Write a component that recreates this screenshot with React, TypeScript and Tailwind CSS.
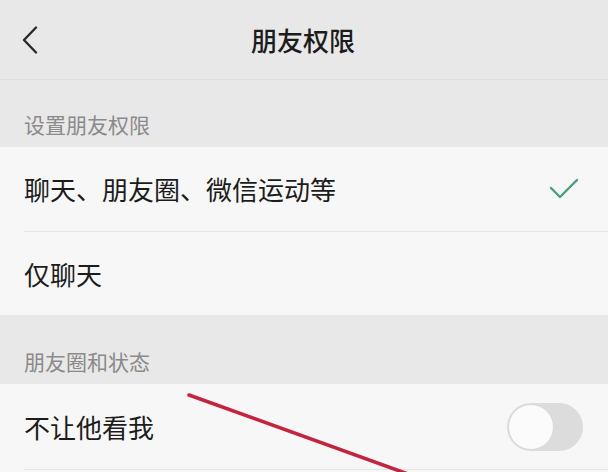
import React from "react";

const font = { fontFamily: '"Noto Sans CJK SC", "Noto Sans", sans-serif' };

export default function App() {
  return (
    <div
      className="relative w-[608px] h-[472px] overflow-hidden bg-[#e8e8e8] text-[#1c1c1c]"
      style={font}
    >
      {/* Header */}
      <div className="grid grid-cols-[1fr_auto_1fr] items-center h-[80px] border-b border-[#e0e0e0]">
        <div className="pl-[22px] flex items-center">
          <svg width="16" height="28" viewBox="0 0 16 28" fill="none">
            <path d="M14 1.5 L2 14 L14 26.5" stroke="#2a2a2a" strokeWidth="2.4" strokeLinecap="round" strokeLinejoin="round" />
          </svg>
        </div>
        <div className="text-[26px] leading-[32px] font-medium pr-[2px]">朋友权限</div>
        <div />
      </div>

      {/* Section header 1 */}
      <div className="h-[67px] flex items-end pb-[9px] pl-[24px] text-[21px] leading-[28px] text-[#8a8a8a]">
        设置朋友权限
      </div>

      {/* Rows */}
      <div className="bg-[#f7f7f7]">
        <div className="h-[84px] flex items-center justify-between pl-[24px] pr-[28px]">
          <span className="text-[26px] leading-[32px]">聊天、朋友圈、微信运动等</span>
          <svg width="32" height="24" viewBox="0 0 32 24" fill="none">
            <path d="M3 11 L12 20 L29 3" stroke="#4a9e77" strokeWidth="2.4" strokeLinecap="round" strokeLinejoin="round" />
          </svg>
        </div>
        <div className="ml-[24px] h-px bg-[#e4e4e4]" />
        <div className="h-[83px] flex items-center pl-[24px]">
          <span className="text-[26px] leading-[32px]">仅聊天</span>
        </div>
      </div>

      {/* Section header 2 */}
      <div className="h-[69px] flex items-end pb-[9px] pl-[24px] text-[21px] leading-[28px] text-[#8a8a8a]">
        朋友圈和状态
      </div>

      <div className="bg-[#f7f7f7]">
        <div className="h-[85px] flex items-center justify-between pl-[24px] pr-[25px]">
          <span className="text-[26px] leading-[32px]">不让他看我</span>
          <div className="w-[76px] h-[48px] rounded-full bg-[#dcdcdc] p-[1px] flex items-center">
            <div className="w-[46px] h-[46px] rounded-full bg-[#fbfbfb] border border-[#d8d8d8]" />
          </div>
        </div>
        <div className="ml-[24px] h-px bg-[#e4e4e4]" />
        <div className="h-[40px]" />
      </div>

      {/* Red annotation line */}
      <svg className="absolute inset-0 pointer-events-none" width="608" height="472" viewBox="0 0 608 472">
        <line x1="189" y1="395" x2="408" y2="474" stroke="#c4243c" strokeWidth="3.6" strokeLinecap="round" />
      </svg>
    </div>
  );
}
